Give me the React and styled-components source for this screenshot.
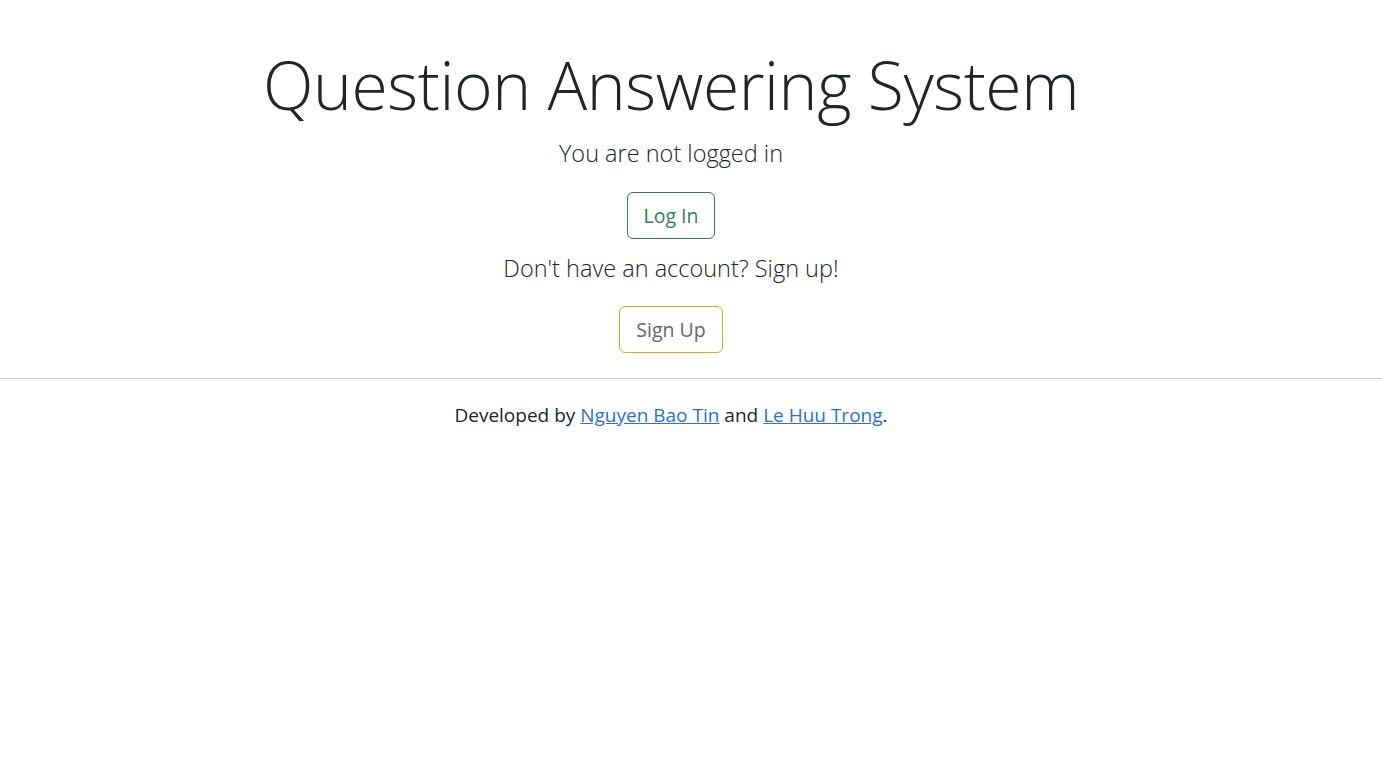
import styled, { createGlobalStyle } from "styled-components";

const GlobalStyle = createGlobalStyle`
  *, *::before, *::after {
    box-sizing: border-box;
  }

  body {
    margin: 0;
    background: #fff;
    color: #212529;
    font-family: "Open Sans", "Noto Sans", sans-serif;
    font-size: 16px;
    line-height: 1.5;
  }
`;

const Page = styled.div`
  display: flex;
  flex-direction: column;
  min-height: 769px;
`;

// content column sits a little left of the window centre
const Main = styled.main`
  display: flex;
  flex-direction: column;
  align-items: center;
  padding: 45px 40px 0 0;
  text-align: center;
`;

const Title = styled.h1`
  margin: 0;
  font-size: 66px;
  font-weight: 300;
  line-height: 1.2;
  letter-spacing: -0.4px;
  color: #212529;
`;

const Lead = styled.p`
  margin: ${({ $top }) => $top || 0}px 0 0;
  font-size: 23.5px;
  font-weight: 300;
  line-height: 1.5;
`;

const OutlineButton = styled.button`
  margin-top: ${({ $top }) => $top || 0}px;
  padding: 8px 16px;
  height: 47px;
  font-family: inherit;
  font-size: 19.5px;
  line-height: 1.5;
  color: ${({ $text }) => $text};
  background: transparent;
  border: 1px solid ${({ $border }) => $border};
  border-radius: 6px;
  cursor: pointer;
`;

const Divider = styled.hr`
  width: 100%;
  margin: 25px 0 0;
  border: 0;
  border-top: 1px solid #c8c8c8;
`;

const Footer = styled.footer`
  padding: 22px 40px 0 0;
  text-align: center;
  font-size: 19px;
  color: #212529;
`;

const Link = styled.a`
  color: #2a6fd6;
  text-decoration: underline;
`;

export default function App() {
  return (
    <Page>
      <GlobalStyle />
      <Main>
        <Title>Question Answering System</Title>
        <Lead $top={12}>You are not logged in</Lead>
        <OutlineButton $top={21} $text="#2e7d5c" $border="#2e7d5c">
          Log In
        </OutlineButton>
        <Lead $top={12}>Don't have an account? Sign up!</Lead>
        <OutlineButton $top={19} $text="#666" $border="#c9b21a">
          Sign Up
        </OutlineButton>
      </Main>
      <Divider />
      <Footer>
        Developed by <Link href="#">Nguyen Bao Tin</Link> and{" "}
        <Link href="#">Le Huu Trong</Link>.
      </Footer>
    </Page>
  );
}
